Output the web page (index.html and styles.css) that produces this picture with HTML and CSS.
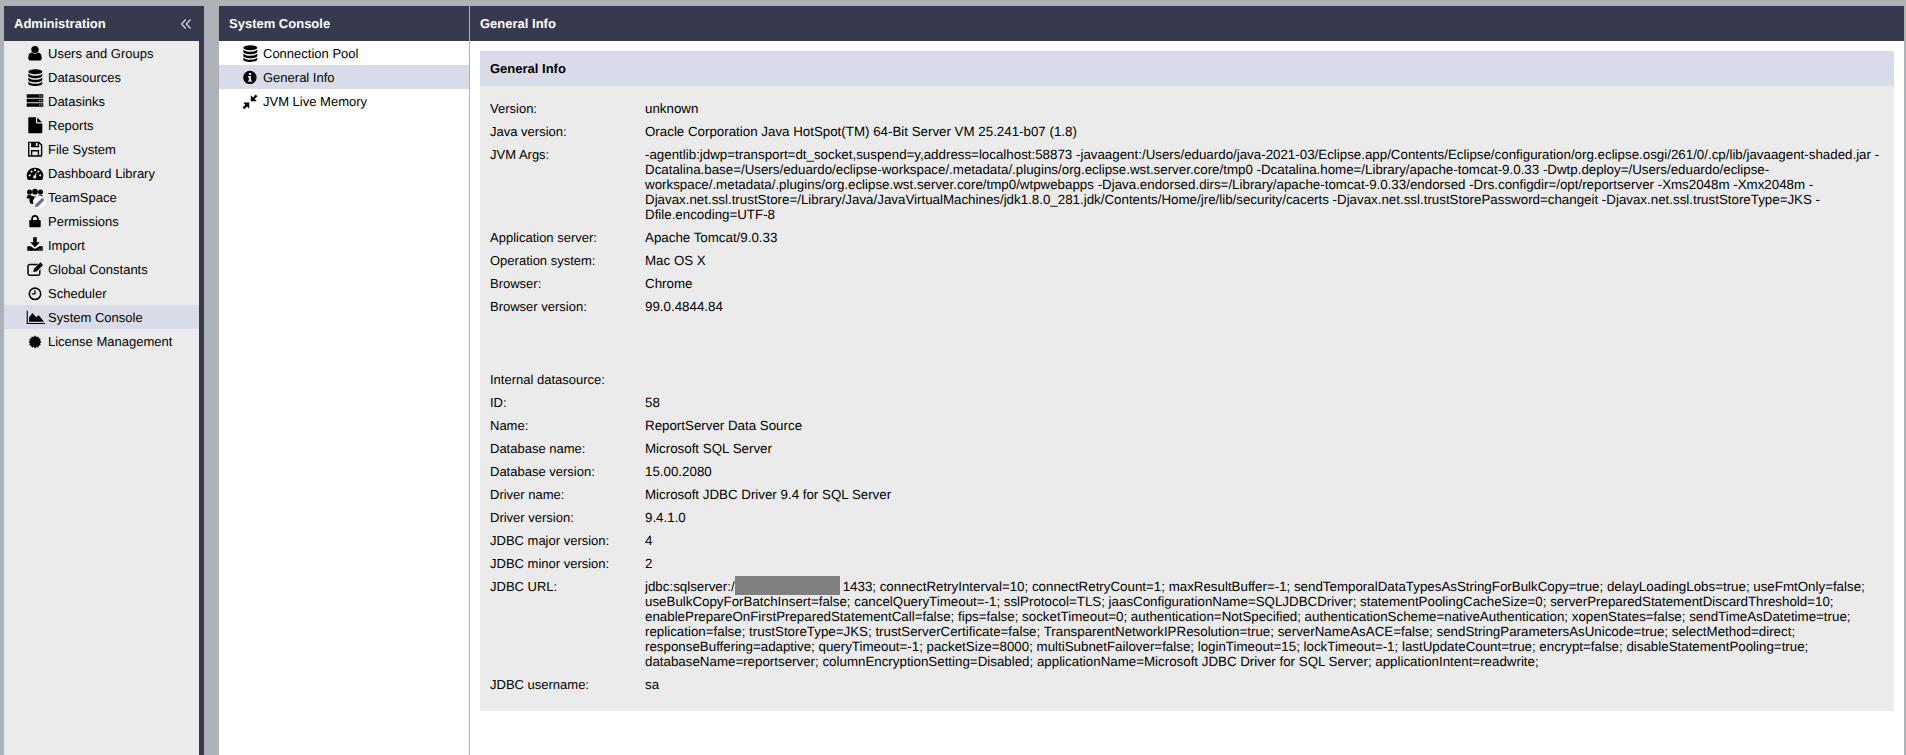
FILE: index.html
```html
<!DOCTYPE html>
<html lang="en">
<head>
<meta charset="utf-8">
<title>General Info</title>
<link rel="stylesheet" href="styles.css">
</head>
<body>
<svg class="sprite" aria-hidden="true">
  <symbol id="i-user" viewBox="0 0 18 18"><circle cx="9" cy="5.6" r="3.7"/><path d="M2.300 14.200c0-3.400 1.300-5.400 3.600-5.600 1 .8 2 1.200 3.100 1.200s2.100-.4 3.100-1.200c2.300.2 3.600 2.200 3.600 5.600 0 1.500-1 2.400-2.400 2.400H4.700c-1.400 0-2.400-.9-2.400-2.400z"/></symbol>
  <symbol id="i-db" viewBox="0 0 18 18"><ellipse cx="9.300" cy="3.700" rx="7" ry="2.500"/><path d="M2.300 5.400c1 1.500 3.900 2.300 7 2.300s6-.8 7-2.300v2.400c0 1.400-3.100 2.500-7 2.500s-7-1.100-7-2.500z"/><path d="M2.300 9.500c1 1.500 3.900 2.300 7 2.300s6-.8 7-2.300v2.300c0 1.400-3.100 2.500-7 2.500s-7-1.100-7-2.500z"/><path d="M2.300 13.500c1 1.500 3.900 2.300 7 2.300s6-.8 7-2.300v1.900c0 1.400-3.100 2.500-7 2.500s-7-1.100-7-2.500z"/></symbol>
  <symbol id="i-server" viewBox="0 0 18 18"><path fill-rule="evenodd" d="M.7 2.300h16.600v3.400H.7zM13.200 3.400v1.100h1.200V3.400zM15.300 3.400v1.100h1.100V3.400zM.7 6.800h16.600v3.400H.7zM13.200 7.900V9h1.200V7.900zM15.300 7.900V9h1.100V7.900zM.7 11.300h16.600v3.400H.7zM13.200 12.400v1.100h1.200v-1.100zM15.300 12.400v1.100h1.100v-1.100z"/></symbol>
  <symbol id="i-file" viewBox="0 0 18 18"><path d="M2.300 2.300c0-.6.4-1 1-1H10v5.200c0 .5.400.9.900.9h5.400v8.900c0 .6-.4 1-1 1h-12c-.6 0-1-.4-1-1z"/><path d="M11.200 1.500l4.900 4.800h-4.900z"/></symbol>
  <symbol id="i-floppy" viewBox="0 0 18 18"><path fill-rule="evenodd" d="M3 1.700h10.300l3 3v10.700c0 .7-.6 1.300-1.300 1.300H3c-.7 0-1-.6-1-1.300V3c0-.7.300-1.300 1-1.300zM3.400 3.100v12.200h1.500v-5.200h8.200v5.200h1.800V5.300l-1.800-1.900v3.800H5.100V3.100zM6.300 11.500v3.800h5.400v-3.800zM9.800 3.100v2.900h1.800V3.100z"/></symbol>
  <symbol id="i-gauge" viewBox="0 0 18 18"><path fill-rule="evenodd" d="M9 3.700c4.600 0 8.300 3.300 8.300 7.900 0 1.600-.4 3.100-1.200 4.400H1.900C1.100 14.700.7 13.200.7 11.600.7 7 4.400 3.700 9 3.700zM3.800 10.200a1.100 1.100 0 1 0 0 2.200 1.100 1.100 0 0 0 0-2.200zM5.600 6.500a1.100 1.100 0 1 0 0 2.200 1.100 1.100 0 0 0 0-2.200zM9 5.100A1.100 1.100 0 1 0 9 7.300 1.100 1.100 0 0 0 9 5.100zM12.400 6.500a1.100 1.100 0 1 0 0 2.200 1.100 1.100 0 0 0 0-2.200zM14.200 10.200a1.100 1.100 0 1 0 0 2.200 1.100 1.100 0 0 0 0-2.200zM10.500 7.800L8.700 11.200a1.600 1.600 0 1 0 1.300.6z"/></symbol>
  <symbol id="i-team" viewBox="0 0 21 21"><circle cx="3.500" cy="4" r="2.500"/><circle cx="9" cy="3.700" r="2.900"/><circle cx="14.500" cy="4" r="2.500"/><path d="M.7 10.500c0-2.400 1-3.700 2.200-3.700h2.200c-.6 1-.8 2.300-.6 3.700z"/><path d="M12.800 6.800H15c1.300 0 2.300 1.300 2.300 3.700H13.400c.2-1.400 0-2.700-.6-3.700z"/><path d="M5.500 7.600c1 .7 2.200 1.100 3.500 1.100s2.500-.4 3.500-1.100c1.300.5 2 2.100 2 4.400 0 2.400-1 4-2.500 4H6c-1.500 0-2.500-1.600-2.500-4 0-2.300.7-3.900 2-4.400z"/><circle cx="13.500" cy="14" r="6.500" fill="#fff"/><path fill="#5f6f9c" d="M16.300 9.700l2.200 2.200-6.600 6.600-3 .8.800-3z"/></symbol>
  <symbol id="i-lock" viewBox="0 0 18 18"><path fill-rule="evenodd" d="M5.200 8V6.700C5.200 4.500 6.900 3 9 3s3.800 1.500 3.800 3.700V8h.9c.6 0 1 .4 1 1v5.300c0 .6-.4 1-1 1H4.300c-.6 0-1-.4-1-1V9c0-.6.4-1 1-1zM7 8h4V6.700C11 5.500 10.100 4.800 9 4.800S7 5.500 7 6.700z"/></symbol>
  <symbol id="i-down" viewBox="0 0 18 18"><path d="M7.200 1.300h3.600v5h3l-4.800 5-4.800-5h3z"/><path fill-rule="evenodd" d="M1.300 10.300h3.300L9 13l4.400-2.700h3.300v4.400H1.300zM12.500 12.700v.9h1v-.9zM14.500 12.700v.9h1v-.9z"/></symbol>
  <symbol id="i-edit" viewBox="0 0 18 18"><path d="M3.800 3.800h8.400l-1.400 1.400h-7c-.6 0-1 .4-1 1v7.300c0 .6.400 1 1 1h8.300c.6 0 1-.4 1-1v-3l1.400-1.400v4.400c0 1.500-1.100 2.500-2.400 2.500H3.800c-1.300 0-2.500-1-2.500-2.500V6.300c0-1.500 1.200-2.500 2.500-2.500z"/><path d="M14.500 2.300l2.600 2.600-6.500 6.500-3.300.7.700-3.300z"/></symbol>
  <symbol id="i-clock" viewBox="0 0 18 18"><path fill-rule="evenodd" d="M9 3.300a6.500 6.500 0 1 1 0 13 6.500 6.500 0 0 1 0-13zM9 4.900a4.900 4.900 0 1 0 0 9.800 4.900 4.900 0 0 0 0-9.800zM8.300 6.300h1.300v4.300H5.800V9.300h2.500z"/></symbol>
  <symbol id="i-chart" viewBox="0 0 20 18"><path d="M.7 2.700h1.100v12.200H19v1.100H.7z"/><path d="M3 13.800V9.500L6.500 5l3.700 4.200 2.600-2 5.200 6.600z"/></symbol>
  <symbol id="i-cert" viewBox="0 0 18 18"><polygon points="15.400,10 14.120,11.370 14.540,13.200 12.750,13.750 12.200,15.540 10.370,15.120 9,16.400 7.630,15.120 5.800,15.540 5.250,13.750 3.460,13.200 3.880,11.370 2.600,10 3.880,8.630 3.460,6.800 5.250,6.250 5.800,4.460 7.630,4.880 9,3.600 10.370,4.880 12.200,4.460 12.750,6.250 14.540,6.800 14.120,8.630"/></symbol>
  <symbol id="i-info" viewBox="0 0 18 18"><path fill-rule="evenodd" d="M8.900 2.700a6.700 6.700 0 1 1 0 13.400 6.700 6.700 0 0 1 0-13.400zM7.800 4.900v2h2.300v-2zM6.900 8v1.400h.9v3H6.900v1.300h4.100v-1.300h-.9V8z"/></symbol>
  <symbol id="i-compress" viewBox="0 0 18 18"><path d="M9.800 3.200V9.200H15.800L13.600 7 16.400 4.200 14.800 2.600 12 5.400z"/><path d="M8.200 10.600V16.600L6 14.400 3.200 17.200 1.600 15.600 4.400 12.800 2.200 10.600z"/></symbol>
</svg>

<div class="page">
  <aside class="panel-admin">
    <header class="bar bar-admin"><span>Administration</span><svg class="collapse" viewBox="0 0 10 10"><path d="M4.700.5L.5 5l4.200 4.500M9.500.5L5.300 5l4.200 4.500"/></svg></header>
    <nav class="menu menu-admin">
      <a class="item"><svg class="ico"><use href="#i-user"/></svg>Users and Groups</a>
      <a class="item"><svg class="ico"><use href="#i-db"/></svg>Datasources</a>
      <a class="item"><svg class="ico"><use href="#i-server"/></svg>Datasinks</a>
      <a class="item"><svg class="ico"><use href="#i-file"/></svg>Reports</a>
      <a class="item"><svg class="ico"><use href="#i-floppy"/></svg>File System</a>
      <a class="item"><svg class="ico"><use href="#i-gauge"/></svg>Dashboard Library</a>
      <a class="item"><svg class="ico ico-team"><use href="#i-team"/></svg>TeamSpace</a>
      <a class="item"><svg class="ico"><use href="#i-lock"/></svg>Permissions</a>
      <a class="item"><svg class="ico"><use href="#i-down"/></svg>Import</a>
      <a class="item"><svg class="ico"><use href="#i-edit"/></svg>Global Constants</a>
      <a class="item"><svg class="ico"><use href="#i-clock"/></svg>Scheduler</a>
      <a class="item active"><svg class="ico ico-chart"><use href="#i-chart"/></svg>System Console</a>
      <a class="item"><svg class="ico"><use href="#i-cert"/></svg>License Management</a>
    </nav>
  </aside>

  <section class="panel-console">
    <header class="bar">System Console</header>
    <nav class="menu">
      <a class="item"><svg class="ico"><use href="#i-db"/></svg>Connection Pool</a>
      <a class="item active"><svg class="ico"><use href="#i-info"/></svg>General Info</a>
      <a class="item"><svg class="ico"><use href="#i-compress"/></svg>JVM Live Memory</a>
    </nav>
  </section>

  <main class="panel-main">
    <header class="bar">General Info</header>
    <div class="content">
      <section class="card">
        <h2 class="card-title">General Info</h2>
        <dl class="info">
          <dt>Version:</dt><dd>unknown</dd>
          <dt>Java version:</dt><dd>Oracle Corporation Java HotSpot(TM) 64-Bit Server VM 25.241-b07 (1.8)</dd>
          <dt>JVM Args:</dt><dd>-agentlib:jdwp=transport=dt_socket,suspend=y,address=localhost:58873 -javaagent:/Users/eduardo/java-2021-03/Eclipse.app/Contents/Eclipse/configuration/org.eclipse.osgi/261/0/.cp/lib/javaagent-shaded.jar -Dcatalina.base=/Users/eduardo/eclipse-workspace/.metadata/.plugins/org.eclipse.wst.server.core/tmp0 -Dcatalina.home=/Library/apache-tomcat-9.0.33 -Dwtp.deploy=/Users/eduardo/eclipse-workspace/.metadata/.plugins/org.eclipse.wst.server.core/tmp0/wtpwebapps -Djava.endorsed.dirs=/Library/apache-tomcat-9.0.33/endorsed -Drs.configdir=/opt/reportserver -Xms2048m -Xmx2048m -Djavax.net.ssl.trustStore=/Library/Java/JavaVirtualMachines/jdk1.8.0_281.jdk/Contents/Home/jre/lib/security/cacerts -Djavax.net.ssl.trustStorePassword=changeit -Djavax.net.ssl.trustStoreType=JKS -Dfile.encoding=UTF-8</dd>
          <dt>Application server:</dt><dd>Apache Tomcat/9.0.33</dd>
          <dt>Operation system:</dt><dd>Mac OS X</dd>
          <dt>Browser:</dt><dd>Chrome</dd>
          <dt>Browser version:</dt><dd>99.0.4844.84</dd>
          <div class="spacer"></div>
          <dt>Internal datasource:</dt><dd></dd>
          <dt>ID:</dt><dd>58</dd>
          <dt>Name:</dt><dd>ReportServer Data Source</dd>
          <dt>Database name:</dt><dd>Microsoft SQL Server</dd>
          <dt>Database version:</dt><dd>15.00.2080</dd>
          <dt>Driver name:</dt><dd>Microsoft JDBC Driver 9.4 for SQL Server</dd>
          <dt>Driver version:</dt><dd>9.4.1.0</dd>
          <dt>JDBC major version:</dt><dd>4</dd>
          <dt>JDBC minor version:</dt><dd>2</dd>
          <dt>JDBC URL:</dt><dd>jdbc:sqlserver:/<span class="redact"></span>1433; connectRetryInterval=10; connectRetryCount=1; maxResultBuffer=-1; sendTemporalDataTypesAsStringForBulkCopy=true; delayLoadingLobs=true; useFmtOnly=false; useBulkCopyForBatchInsert=false; cancelQueryTimeout=-1; sslProtocol=TLS; jaasConfigurationName=SQLJDBCDriver; statementPoolingCacheSize=0; serverPreparedStatementDiscardThreshold=10; enablePrepareOnFirstPreparedStatementCall=false; fips=false; socketTimeout=0; authentication=NotSpecified; authenticationScheme=nativeAuthentication; xopenStates=false; sendTimeAsDatetime=true; replication=false; trustStoreType=JKS; trustServerCertificate=false; TransparentNetworkIPResolution=true; serverNameAsACE=false; sendStringParametersAsUnicode=true; selectMethod=direct; responseBuffering=adaptive; queryTimeout=-1; packetSize=8000; multiSubnetFailover=false; loginTimeout=15; lockTimeout=-1; lastUpdateCount=true; encrypt=false; disableStatementPooling=true; databaseName=reportserver; columnEncryptionSetting=Disabled; applicationName=Microsoft JDBC Driver for SQL Server; applicationIntent=readwrite;</dd>
          <dt>JDBC username:</dt><dd>sa</dd>
        </dl>
      </section>
    </div>
  </main>
</div>
</body>
</html>
```

FILE: styles.css
```css
* { box-sizing: border-box; }
html, body { margin: 0; height: 100%; overflow: hidden; }
body {
  background: #adb2b6;
  color: #000;
  font-family: "Liberation Sans", Arial, sans-serif;
  font-size: 13px;
  line-height: 15px;
  text-rendering: geometricPrecision;
}
.sprite { display: none; }

.page {
  display: flex;
  height: 100vh;
  padding: 6px 2px 0 4px;
}

.panel-admin {
  flex: 0 0 200px;
  display: flex;
  flex-direction: column;
  margin-right: 15px;
  background: #373a4f;
}
.panel-console {
  flex: 0 0 251px;
  background: #fff;
  border-right: 1px solid #adb2b6;
}
.panel-main {
  flex: 1 1 auto;
  min-width: 0;
  background: #fff;
}

.bar {
  display: flex;
  align-items: center;
  justify-content: space-between;
  height: 35px;
  padding: 0 10px;
  background: #373a4f;
  color: #fff;
  font-weight: bold;
}
.collapse {
  width: 10px;
  height: 10px;
  margin-right: 3px;
  fill: none;
  stroke: #e3e5ea;
  stroke-width: 1.1;
}

.menu { background: #fff; }
.menu-admin {
  flex: 1 1 auto;
  margin-right: 5px;
  background: #ebebeb;
}
.item {
  display: flex;
  align-items: center;
  height: 24px;
  padding-left: 22px;
}
.item.active { background: #d9dce8; }
.ico {
  flex: none;
  width: 18px;
  height: 18px;
  margin-right: 4px;
  overflow: visible;
}
.ico-team { width: 21px; height: 21px; margin: 3px 1px 0 0; }
.ico-chart { width: 20px; margin-right: 2px; }

.content { padding: 10px; }
.card { background: #ebebeb; }
.card-title {
  display: flex;
  align-items: center;
  height: 35px;
  margin: 0;
  padding: 0 10px;
  background: #d9dce8;
  font-size: 13px;
  font-weight: bold;
}
.info {
  display: grid;
  grid-template-columns: 155px 1fr;
  row-gap: 8px;
  margin: 0;
  padding: 15px 10px 19px;
}
.info dt { margin: 0; }
.info dd { margin: 0; font-size: 13.33px; }
.spacer { grid-column: 1 / -1; height: 42px; }
.redact {
  display: inline-block;
  width: 105px;
  height: 19px;
  margin: -3px 3px -1px 0;
  vertical-align: -3px;
  background: #808080;
}
```
